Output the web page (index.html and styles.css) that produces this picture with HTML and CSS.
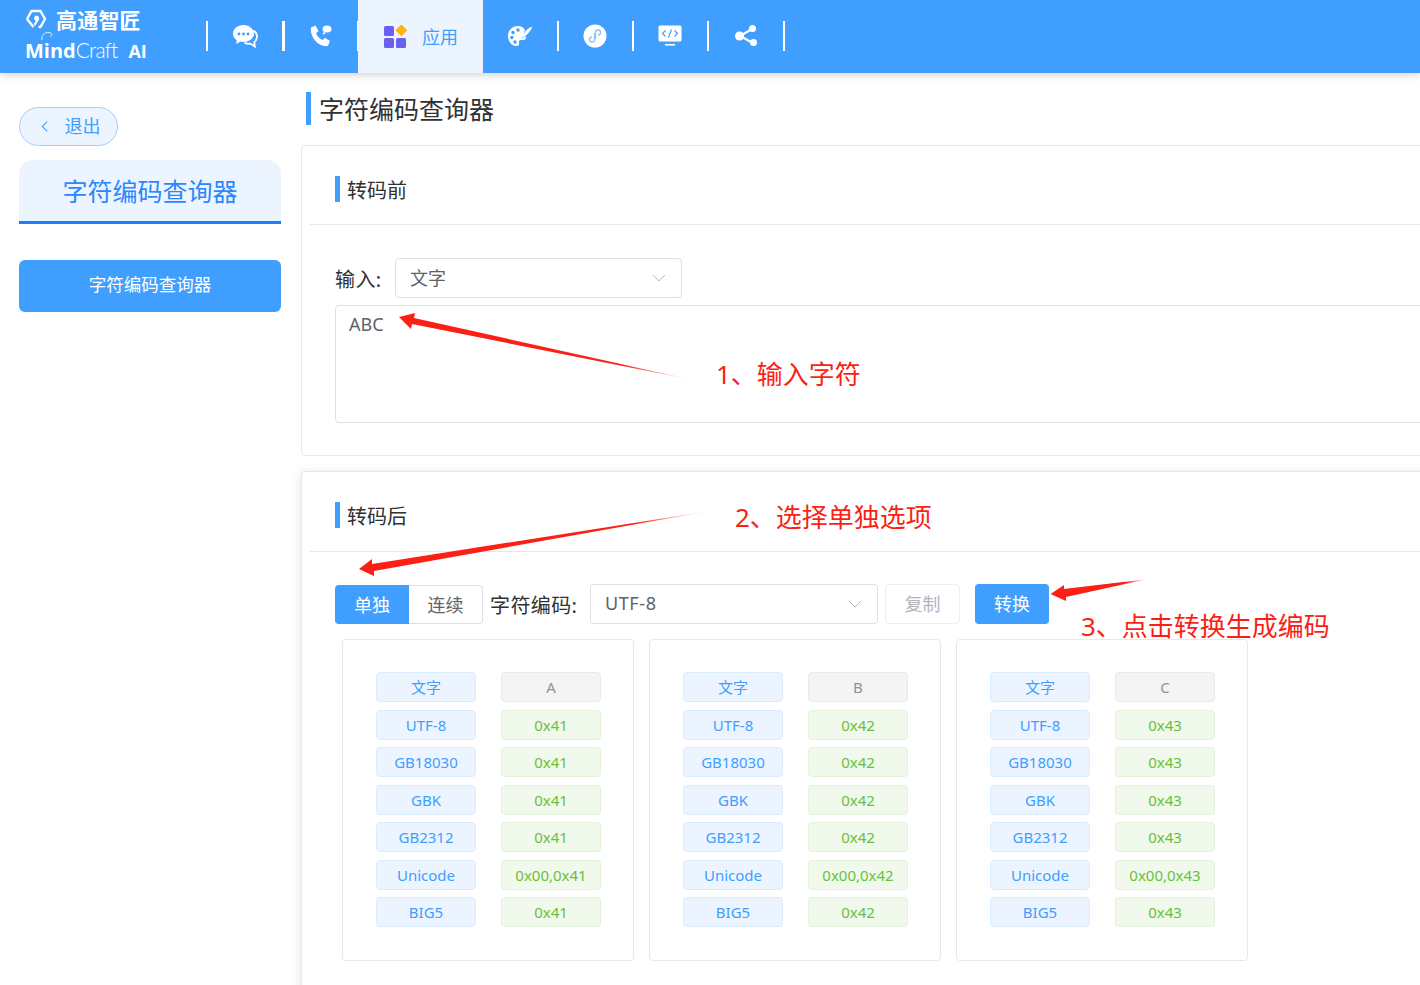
FILE: index.html
```html
<!DOCTYPE html>
<html lang="zh-CN">
<head>
<meta charset="utf-8">
<title>字符编码查询器</title>
<link rel="stylesheet" href="styles.css">
</head>
<body>
<header class="topbar">
  <div class="logo">
    <div class="logo-cn">
      <svg class="logo-mark" viewBox="0 0 22 20" width="22" height="20"><path d="M2 10 6.500 2h9L20 10l-4.500 8h-2" fill="none" stroke="#fff" stroke-width="2.400" stroke-linejoin="round"/><path d="M8.500 18 2 10" fill="none" stroke="#fff" stroke-width="2.400"/><path d="M11 6.500a3.200 3.200 0 0 1 1.800 5.900L10 17l-1.300-2 2.200-3a3 3 0 0 1 .1-5.500z" fill="#fff"/></svg>
      <span class="logo-name">高通智匠</span>
    </div>
    <div class="logo-en"><b>Mind</b><span class="logo-craft">Craft</span><b class="logo-ai">AI</b>
      <svg class="logo-swoosh" viewBox="0 0 14 10" width="14" height="10"><path d="M2 9C1 4 5 1 9 1.500c3 .5 4 3 1 4" fill="none" stroke="#fff" stroke-width=".8"/></svg>
    </div>
  </div>
  <nav class="nav">
    <i class="sep"></i>
    <a class="nav-item first"><svg viewBox="0 0 26 24" width="26" height="24"><path d="M11.500 1C5.700 1 1 4.900 1 9.700c0 2.700 1.500 5.100 3.800 6.700l-.6 3.600 4.200-2.400c1 .2 2 .3 3.100.3 5.800 0 10.500-3.900 10.500-8.200S17.300 1 11.500 1z" fill="#fff"/><path d="M21.500 6.500c2.200 1.500 3.500 3.700 3.500 6.200 0 2.200-1 4.200-2.700 5.600l.5 4.200-4.300-2.900c-1.800.3-4.300 0-6-1" fill="none" stroke="#fff" stroke-width="1.800"/><circle cx="7" cy="10" r="1.400" fill="#409eff"/><circle cx="11.500" cy="10" r="1.400" fill="#409eff"/><circle cx="16" cy="10" r="1.400" fill="#409eff"/></svg></a>
    <i class="sep"></i>
    <a class="nav-item"><svg viewBox="0 0 24 24" width="24" height="24"><path d="M2 3.500 6.500 1.500l3 5.500-2.300 2.200c.8 2.900 3.500 5.800 6.600 6.800l2.200-2.200 5 3.300-2 4.600C10 24 .5 13 2 3.500z" fill="#fff"/><ellipse cx="18" cy="5" rx="4.500" ry="3.500" fill="#fff"/><path d="m14.500 8-1 3 3.500-2z" fill="#fff"/></svg></a>
    <i class="sep thin"></i>
    <a class="nav-tab">
      <svg viewBox="0 0 24 24" width="24" height="24"><rect x="1" y="1" width="10" height="10" rx="1.500" fill="#6c5ff0"/><rect x="1" y="13" width="10" height="10" rx="1.500" fill="#6c5ff0"/><rect x="13" y="13" width="10" height="10" rx="1.500" fill="#6c5ff0"/><rect x="14.100" y="1.100" width="8.500" height="8.500" rx="1" transform="rotate(45 18.350 5.350)" fill="#ffb30f"/></svg>
      <span>应用</span>
    </a>
    <a class="nav-item after-tab"><svg viewBox="0 0 26 24" width="26" height="24"><path d="M11 2C5 2 1 6.500 1 12c0 5 3.500 10 8.500 10 2.500 0 3-1.500 2.500-3-.5-1.800.5-3 2.500-3 1.500 0 3 .3 4-1 1-1.500.8-3-.5-2.500l-3.500 2.500L18 6c-1.500-2.500-4-4-7-4z" fill="#fff"/><path d="M25.500 2.500c-3 .8-7 4-10 8.500l-1.500 3.500 3.500-2C20.500 10.500 24 6.500 25.500 2.500z" fill="#fff"/><circle cx="6" cy="8.500" r="1.700" fill="#409eff"/><circle cx="11" cy="6" r="1.700" fill="#409eff"/><circle cx="4.800" cy="13.500" r="1.700" fill="#409eff"/><circle cx="8" cy="18" r="1.700" fill="#409eff"/></svg></a>
    <i class="sep"></i>
    <a class="nav-item"><svg viewBox="0 0 24 24" width="24" height="24"><circle cx="12" cy="12" r="11.500" fill="#fff"/><path d="M11.500 9v6.500a2.500 2.500 0 1 1-2.500-2.500M12.500 15V8.500A2.500 2.500 0 1 1 15 11" fill="none" stroke="#8cc4ff" stroke-width="1.300"/></svg></a>
    <i class="sep"></i>
    <a class="nav-item"><svg viewBox="0 0 24 22" width="24" height="22"><rect x="0.500" y="0.500" width="23" height="16" rx="1.500" fill="#fff"/><rect x="7" y="19" width="10" height="1.600" fill="#fff"/><path d="M7.500 5.500 4.500 8.500l3 3M16.500 5.500l3 3-3 3M13.500 4.500l-3 8" fill="none" stroke="#409eff" stroke-width="1.200"/></svg></a>
    <i class="sep"></i>
    <a class="nav-item last"><svg viewBox="0 0 24 24" width="24" height="24"><path d="M6 12 18 5M6 12l13 7" stroke="#fff" stroke-width="2.400"/><circle cx="5.500" cy="12" r="4.500" fill="#fff"/><circle cx="18.500" cy="4.500" r="3.500" fill="#fff"/><circle cx="19.500" cy="18.500" r="3.500" fill="#fff"/></svg></a>
    <i class="sep"></i>
  </nav>
</header>

<div class="layout">
  <aside class="sidebar">
    <button class="exit"><svg viewBox="0 0 10 14" width="9" height="13"><path d="M8 1.500 2.500 7 8 12.500" fill="none" stroke="#409eff" stroke-width="1.200"/></svg><span>退出</span></button>
    <div class="side-title">字符编码查询器</div>
    <button class="side-menu">字符编码查询器</button>
  </aside>

  <main class="main">
    <h1 class="page-title">字符编码查询器</h1>

    <section class="card">
      <div class="card-head"><h2 class="sec-title">转码前</h2></div>
      <div class="card-body">
        <div class="input-row">
          <label class="field-label">输入:</label>
          <div class="select select-input"><span>文字</span><svg class="chev" viewBox="0 0 14 8" width="14" height="8"><path d="M1 1l6 6 6-6" fill="none" stroke="#b4b7bd" stroke-width="1"/></svg></div>
        </div>
        <div class="textarea">ABC</div>
      </div>
    </section>

    <section class="card card-shadow">
      <div class="card-head head-b"><h2 class="sec-title">转码后</h2></div>
      <div class="card-body body-b">
        <div class="toolbar">
          <div class="segment"><span class="seg seg-on">单独</span><span class="seg seg-off">连续</span></div>
          <label class="field-label label-enc">字符编码:</label>
          <div class="select select-enc"><span class="utf">UTF-8</span><svg class="chev" viewBox="0 0 14 8" width="14" height="8"><path d="M1 1l6 6 6-6" fill="none" stroke="#b4b7bd" stroke-width="1"/></svg></div>
          <button class="btn btn-off">复制</button>
          <button class="btn btn-on">转换</button>
        </div>
        <div class="results">
          <div class="result">
            <span class="tag tag-b">文字</span><span class="tag tag-g">A</span>
            <span class="tag tag-b">UTF-8</span><span class="tag tag-s">0x41</span>
            <span class="tag tag-b">GB18030</span><span class="tag tag-s">0x41</span>
            <span class="tag tag-b">GBK</span><span class="tag tag-s">0x41</span>
            <span class="tag tag-b">GB2312</span><span class="tag tag-s">0x41</span>
            <span class="tag tag-b">Unicode</span><span class="tag tag-s">0x00,0x41</span>
            <span class="tag tag-b">BIG5</span><span class="tag tag-s">0x41</span>
          </div>
          <div class="result">
            <span class="tag tag-b">文字</span><span class="tag tag-g">B</span>
            <span class="tag tag-b">UTF-8</span><span class="tag tag-s">0x42</span>
            <span class="tag tag-b">GB18030</span><span class="tag tag-s">0x42</span>
            <span class="tag tag-b">GBK</span><span class="tag tag-s">0x42</span>
            <span class="tag tag-b">GB2312</span><span class="tag tag-s">0x42</span>
            <span class="tag tag-b">Unicode</span><span class="tag tag-s">0x00,0x42</span>
            <span class="tag tag-b">BIG5</span><span class="tag tag-s">0x42</span>
          </div>
          <div class="result">
            <span class="tag tag-b">文字</span><span class="tag tag-g">C</span>
            <span class="tag tag-b">UTF-8</span><span class="tag tag-s">0x43</span>
            <span class="tag tag-b">GB18030</span><span class="tag tag-s">0x43</span>
            <span class="tag tag-b">GBK</span><span class="tag tag-s">0x43</span>
            <span class="tag tag-b">GB2312</span><span class="tag tag-s">0x43</span>
            <span class="tag tag-b">Unicode</span><span class="tag tag-s">0x00,0x43</span>
            <span class="tag tag-b">BIG5</span><span class="tag tag-s">0x43</span>
          </div>
        </div>
      </div>
    </section>
  </main>
</div>

<svg class="arrows" viewBox="0 0 1420 985" width="1420" height="985">
  <defs>
    <linearGradient id="a1" gradientUnits="userSpaceOnUse" x1="399" y1="317" x2="693" y2="380"><stop offset=".75" stop-color="#fb1f16"/><stop offset="1" stop-color="#fb1f16" stop-opacity="0"/></linearGradient>
    <linearGradient id="a2" gradientUnits="userSpaceOnUse" x1="359" y1="569" x2="710" y2="511"><stop offset=".78" stop-color="#fb1f16"/><stop offset="1" stop-color="#fb1f16" stop-opacity="0"/></linearGradient>
    <linearGradient id="a3" gradientUnits="userSpaceOnUse" x1="1050" y1="594" x2="1148" y2="579"><stop offset=".75" stop-color="#fb1f16"/><stop offset="1" stop-color="#fb1f16" stop-opacity="0"/></linearGradient>
  </defs>
  <polygon points="399,317 415,313 414,318 693,380 412,324 411,329" fill="url(#a1)"/>
  <polygon points="359,569 372,559 372,564 710,511 374,571 374,576" fill="url(#a2)"/>
  <polygon points="1050.500,594 1064,585 1064,589 1148,579 1066,597 1066,601" fill="url(#a3)"/>
</svg>
<div class="note note-1">1、输入字符</div>
<div class="note note-2">2、选择单独选项</div>
<div class="note note-3">3、点击转换生成编码</div>
</body>
</html>
```
FILE: styles.css
```css
* { box-sizing: border-box; }
html, body {
  margin: 0;
  width: 1420px;
  height: 985px;
  overflow: hidden;
  background: #fff;
}
body {
  position: relative;
  font-family: "Noto Sans", "Noto Sans CJK SC", sans-serif;
  color: #303133;
}
button { font: inherit; margin: 0; cursor: pointer; }
h1, h2 { margin: 0; font-weight: 400; }

/* top bar */
.topbar {
  height: 73px;
  background: #409eff;
  display: flex;
  box-shadow: 0 2px 8px rgba(0, 0, 0, .18);
  position: relative;
  z-index: 2;
}
.logo {
  width: 205.5px;
  padding: 7px 0 0 25px;
  color: #fff;
  flex: none;
}
.logo-cn { display: flex; align-items: center; height: 24px; }
.logo-mark { margin-right: 9px; }
.logo-name { font-family: "Noto Sans CJK SC", sans-serif; font-size: 21px; font-weight: 700; line-height: 24px; letter-spacing: .2px; padding-bottom: 1px; }
.logo-en {
  position: relative;
  margin-top: 5px;
  font-family: "Open Sans", sans-serif;
  font-size: 20px;
  line-height: 28px;
  white-space: nowrap;
}
.logo-en b { font-weight: 700; }
.logo-craft { font-family: "Lato", sans-serif; font-weight: 300; font-size: 21px; letter-spacing: -.8px; }
.logo-ai { margin-left: 11px; font-size: 18px; }
.logo-swoosh { position: absolute; left: 15px; top: -5px; }

.nav { display: flex; align-items: center; height: 72px; }
.sep { display: block; width: 2.5px; height: 30px; background: #fff; flex: none; }
.sep.thin { width: 1px; }
.nav-item {
  width: 72.500px;
  height: 72px;
  display: flex;
  align-items: center;
  justify-content: center;
  flex: none;
}
.nav-item.first { width: 74px; }
.nav-item.after-tab { width: 73.500px; }
.nav-item.last { width: 73.500px; }
.nav-tab {
  width: 125px;
  height: 73px;
  align-self: flex-start;
  background: #ecf5ff;
  display: flex;
  align-items: center;
  justify-content: center;
  gap: 15px;
  color: #409eff;
  font-size: 18px;
  flex: none;
}
.nav-tab span { padding-bottom: 2px; }

/* layout */
.layout { display: flex; align-items: flex-start; }
.sidebar {
  width: 301px;
  flex: none;
  padding: 34px 20px 0 19px;
}
.exit {
  width: 99px;
  height: 39px;
  border: 1px solid #a0cfff;
  border-radius: 20px;
  background: #ecf5ff;
  color: #409eff;
  font-size: 18px;
  display: flex;
  align-items: center;
  justify-content: center;
  gap: 16px;
  padding: 0 0 0 3px;
  margin-bottom: 14px;
}
.exit span { padding-bottom: 3px; }
.side-title {
  height: 64px;
  background: #ecf5ff;
  border-bottom: 3px solid #1a7fff;
  border-radius: 14px 14px 0 0;
  color: #2b86ff;
  font-size: 25px;
  text-align: center;
  line-height: 62px;
}
.side-menu {
  display: block;
  width: 100%;
  height: 52px;
  margin-top: 36px;
  border: 0;
  border-radius: 6px;
  background: #409eff;
  color: #fff;
  font-size: 17.500px;
  padding: 0 0 5px;
}

/* main */
.main { width: 1300px; flex: none; padding-top: 19px; }
.page-title {
  margin-left: 5px;
  height: 33px;
  border-left: 5px solid #409eff;
  padding-left: 8px;
  font-size: 25px;
  line-height: 35px;
}
.card {
  margin-top: 20px;
  border: 1px solid #e4e7ed;
  border-radius: 4px;
  padding: 0 8px;
  background: #fff;
}
.card-shadow {
  margin-top: 15px;
  height: 600px;
  box-shadow: 0 2px 12px rgba(0, 0, 0, .12);
}
.card-head {
  padding: 30px 0 22px 25px;
  border-bottom: 1px solid #e4e7ed;
}
.head-b { padding-bottom: 23px; }
.sec-title {
  height: 26px;
  border-left: 5px solid #409eff;
  padding-left: 7px;
  font-size: 20px;
  line-height: 29px;
}
.card-body { padding: 33px 0 32px 25px; }
.body-b { padding-top: 32px; }

.input-row { display: flex; align-items: center; height: 40px; }
.field-label { font-size: 20px; width: 60px; flex: none; white-space: nowrap; letter-spacing: .4px; }
.select {
  height: 40px;
  border: 1px solid #dcdfe6;
  border-radius: 4px;
  display: flex;
  align-items: center;
  justify-content: space-between;
  padding: 0 15px 0 14px;
  color: #606266;
  font-size: 18px;
  flex: none;
}
.select span { padding-bottom: 2px; }
.select .utf { letter-spacing: .6px; }
.select-input { width: 287px; }
.select-enc { width: 288px; }
.textarea {
  margin-top: 7px;
  height: 118px;
  border: 1px solid #dcdfe6;
  border-radius: 4px;
  padding: 5px 13px;
  color: #606266;
  font-size: 18px;
  line-height: 26px;
}

.toolbar { display: flex; align-items: center; height: 40px; }
.segment { display: flex; width: 148px; height: 39px; margin-top: 1px; flex: none; }
.seg {
  width: 74px;
  display: flex;
  align-items: center;
  justify-content: center;
  font-size: 18px;
  padding-bottom: 2px;
}
.seg-on { background: #409eff; color: #fff; border-radius: 4px 0 0 4px; }
.seg-off { color: #606266; border: 1px solid #dcdfe6; border-left: 0; border-radius: 0 4px 4px 0; }
.label-enc { width: 107px; padding-left: 7px; }
.btn { height: 40px; border-radius: 4px; font-size: 18px; padding: 0 0 2px; flex: none; }
.btn-off { width: 75px; margin-left: 7px; border: 1px solid #ebeef5; background: #fff; color: #b3b5ba; }
.btn-on { width: 74px; margin-left: 15px; border: 0; background: #409eff; color: #fff; }

.results { display: flex; gap: 15px; margin: 15px 0 0 7px; }
.result {
  width: 292px;
  height: 322px;
  border: 1px solid #e4e7ed;
  border-radius: 4px;
  padding: 32px 0 0 33px;
  display: grid;
  grid-template-columns: 100px 100px;
  grid-auto-rows: 30px;
  column-gap: 25px;
  row-gap: 7.500px;
  align-content: start;
}
.tag {
  border: 1px solid;
  border-radius: 4px;
  font-size: 15px;
  line-height: 28px;
  text-align: center;
  white-space: nowrap;
}
.tag-b { background: #ecf5ff; border-color: #d9ecff; color: #409eff; }
.tag-g { background: #f4f4f5; border-color: #e9e9eb; color: #909399; }
.tag-s { background: #f0f9eb; border-color: #e1f3d8; color: #67c23a; }

/* screenshot annotations */
.arrows { position: absolute; left: 0; top: 0; z-index: 3; pointer-events: none; }
.note {
  position: absolute;
  z-index: 3;
  color: #fb1f16;
  font-size: 26px;
  line-height: 36px;
  white-space: nowrap;
  font-family: "Noto Sans", "Noto Sans CJK SC", sans-serif;
}
.note-1 { left: 716px; top: 356px; }
.note-2 { left: 735px; top: 499px; }
.note-3 { left: 1081px; top: 608px; }
```
